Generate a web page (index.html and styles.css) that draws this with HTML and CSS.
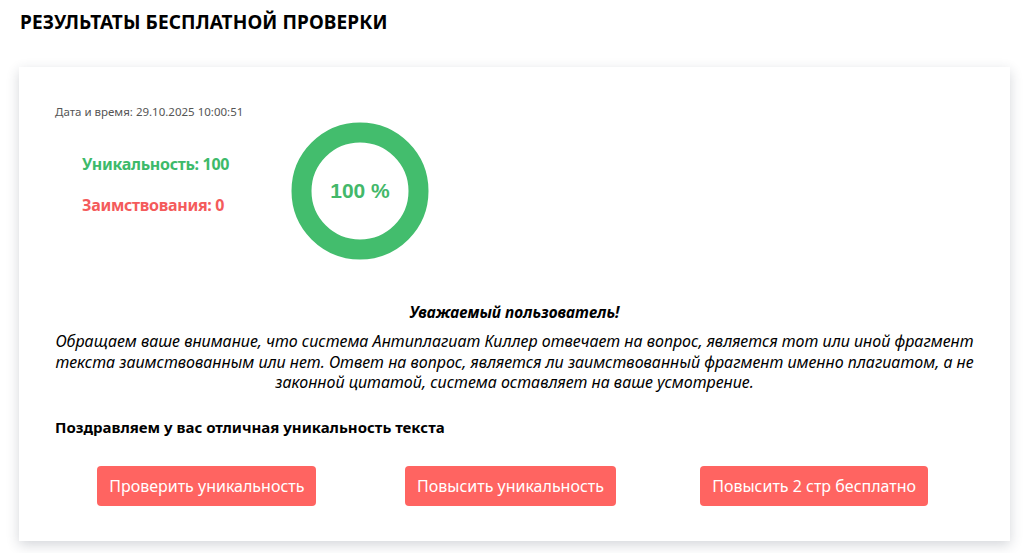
FILE: index.html
```html
<!DOCTYPE html>
<html lang="ru">
<head>
<meta charset="UTF-8">
<meta name="viewport" content="width=device-width, initial-scale=1.0">
<title>Результаты бесплатной проверки</title>
<link rel="stylesheet" href="styles.css">
</head>
<body>

<h2 class="page-title">РЕЗУЛЬТАТЫ БЕСПЛАТНОЙ ПРОВЕРКИ</h2>

<div class="result-card">
    <div class="check-date">Дата и время: 29.10.2025 10:00:51</div>

    <div class="stats-row">
        <div class="stats">
            <div class="stat stat-unique">Уникальность: 100</div>
            <div class="stat stat-borrow">Заимствования: 0</div>
        </div>
        <div class="donut">
            <svg width="138" height="138" viewBox="0 0 138 138">
                <circle cx="69" cy="69" r="58.5" fill="none" stroke="#43bd6d" stroke-width="20"/>
            </svg>
            <span class="donut-label">100 %</span>
        </div>
    </div>

    <div class="notice">
        <p class="notice-title">Уважаемый пользователь!</p>
        <p class="notice-text">Обращаем ваше внимание, что система Антиплагиат Киллер отвечает на вопрос, является тот или иной фрагмент текста заимствованным или нет. Ответ на вопрос, является ли заимствованный фрагмент именно плагиатом, а не законной цитатой, система оставляет на ваше усмотрение.</p>
    </div>

    <p class="congrats">Поздравляем у вас отличная уникальность текста</p>

    <div class="actions">
        <button class="action-btn">Проверить уникальность</button>
        <button class="action-btn">Повысить уникальность</button>
        <button class="action-btn">Повысить 2 стр бесплатно</button>
    </div>
</div>

</body>
</html>
```

FILE: styles.css
```css
body {
    margin: 0;
    padding-bottom: 20px;
    font-family: "Noto Sans", "Open Sans", sans-serif;
    background-color: #fff;
    color: #000;
}

.page-title {
    margin: 0;
    padding: 9px 20px 0;
    font-size: 19px;
    font-weight: bold;
    line-height: 26px;
    letter-spacing: 0.1px;
}

.result-card {
    margin: 32px 14px 0 19px;
    padding: 36px;
    height: 402px;
    background-color: #fff;
    box-shadow: 0 4px 12px rgba(40, 50, 70, 0.2);
}

.check-date {
    font-size: 11.5px;
    color: #555;
    line-height: 17px;
}

.stats-row {
    display: flex;
    align-items: flex-start;
    margin-top: 2px;
}

.stats {
    padding: 32px 0 0 27px;
    width: 209px;
}

.stat {
    font-size: 16px;
    font-weight: bold;
    line-height: 20px;
    letter-spacing: -0.3px;
}

.stat-unique {
    color: #3dba6a;
    margin-bottom: 21px;
}

.stat-borrow {
    color: #f45b5b;
}

.donut {
    position: relative;
    width: 138px;
    height: 138px;
}

.donut svg {
    display: block;
}

.donut-label {
    position: absolute;
    left: 0;
    right: 0;
    top: 57px;
    text-align: center;
    font-family: "Liberation Sans", Arial, sans-serif;
    font-size: 21px;
    font-weight: bold;
    color: #43b86a;
}

.notice {
    text-align: center;
    margin-top: 42px;
}

.notice p {
    margin: 0;
}

.notice-title {
    font-size: 15.5px;
    font-weight: bold;
    font-style: italic;
    line-height: 20px;
}

.notice-text {
    margin-top: 9px !important;
    font-size: 16px;
    font-style: italic;
    line-height: 20.5px;
}

.congrats {
    margin: 24px 0 0;
    font-size: 15px;
    font-weight: bold;
    line-height: 20px;
}

.actions {
    display: grid;
    grid-template-columns: 1fr 1fr 1fr;
    justify-items: center;
    margin-top: 29px;
    padding-right: 8px;
}

.action-btn {
    padding: 0 12px;
    height: 40px;
    font-family: "Noto Sans", "Open Sans", sans-serif;
    font-size: 16px;
    color: #fff;
    background-color: #ff6461;
    border: none;
    border-radius: 4px;
    cursor: pointer;
}

.action-btn:hover {
    background-color: #f04a47;
}
```
